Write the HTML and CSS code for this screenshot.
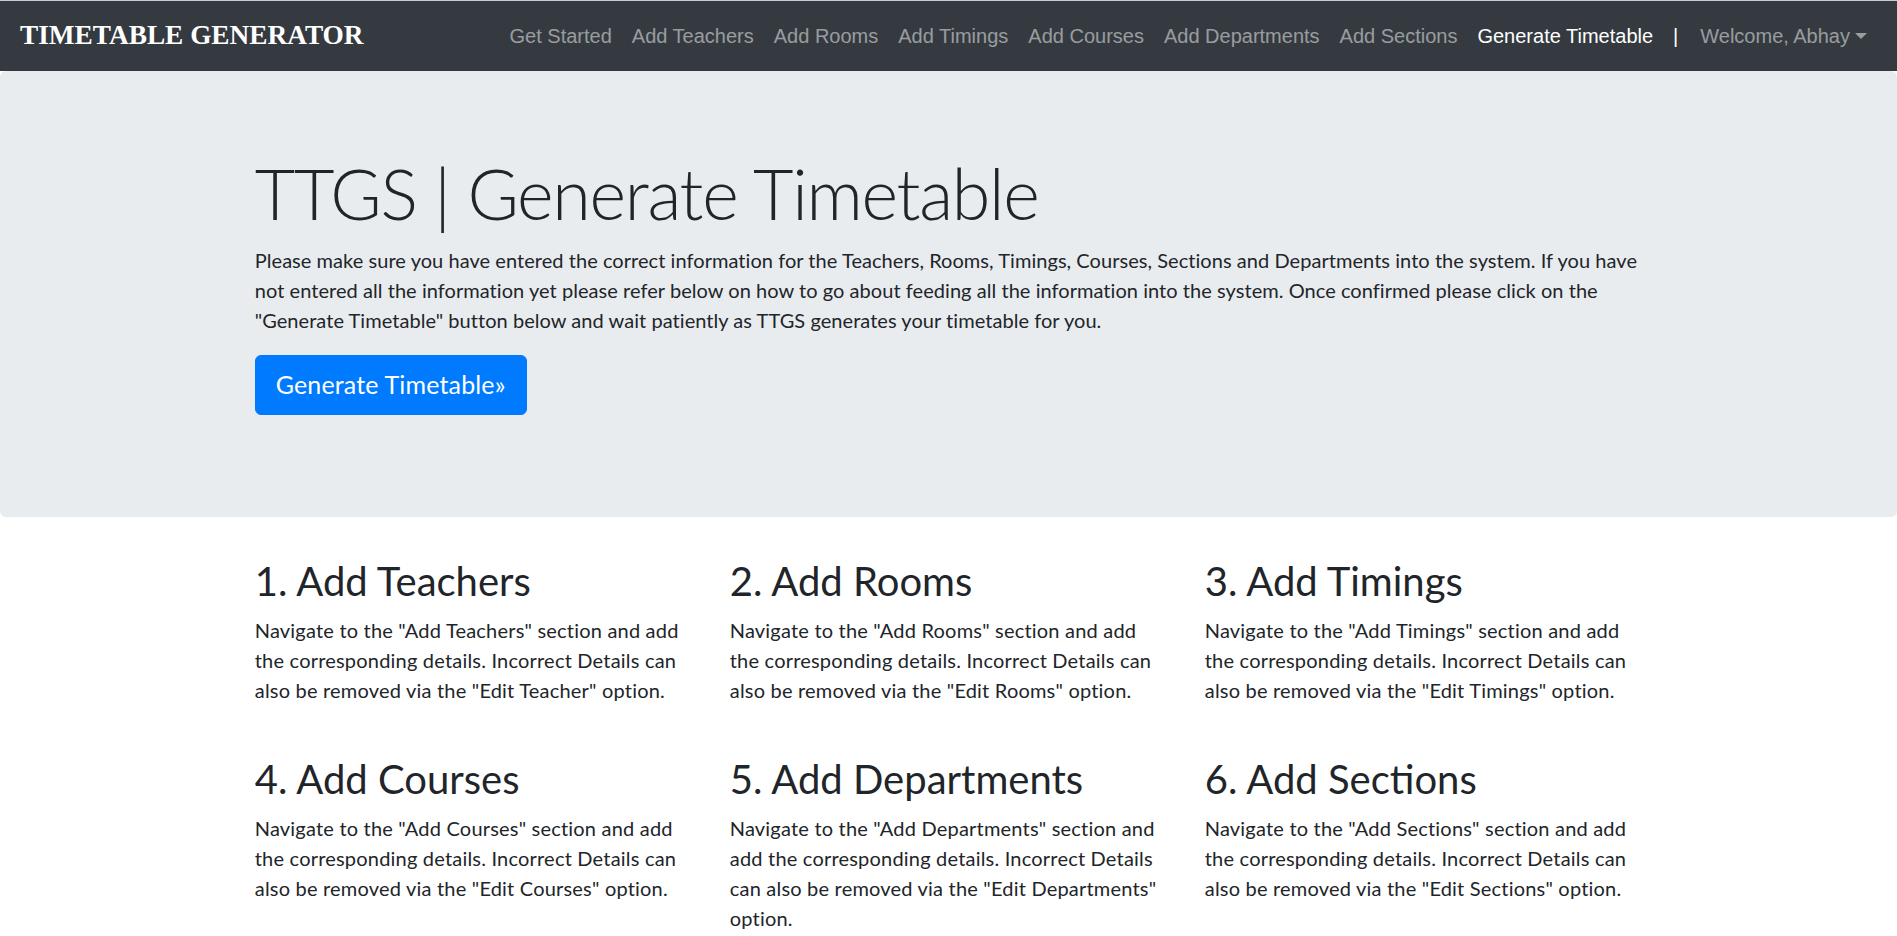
FILE: index.html
```html
<!DOCTYPE html>
<html lang="en">
<head>
<meta charset="utf-8">
<title>TTGS | Generate Timetable</title>
<link rel="stylesheet" href="styles.css">
</head>
<body>
<nav class="navbar">
  <a class="brand" href="#">TIMETABLE GENERATOR</a>
  <ul class="nav">
    <li><a class="nav-link" href="#">Get Started</a></li>
    <li><a class="nav-link" href="#">Add Teachers</a></li>
    <li><a class="nav-link" href="#">Add Rooms</a></li>
    <li><a class="nav-link" href="#">Add Timings</a></li>
    <li><a class="nav-link" href="#">Add Courses</a></li>
    <li><a class="nav-link" href="#">Add Departments</a></li>
    <li><a class="nav-link" href="#">Add Sections</a></li>
    <li><a class="nav-link active" href="#">Generate Timetable</a></li>
    <li><span class="sep">|</span></li>
    <li><a class="nav-link dropdown-toggle" href="#">Welcome, Abhay</a></li>
  </ul>
</nav>
<main>
  <div class="jumbotron">
    <div class="container">
      <h1 class="display">TTGS | Generate Timetable</h1>
      <p class="intro">Please make sure you have entered the correct information for the Teachers, Rooms, Timings, Courses, Sections and Departments into the system. If you have not entered all the information yet please refer below on how to go about feeding all the information into the system. Once confirmed please click on the "Generate Timetable" button below and wait patiently as TTGS generates your timetable for you.</p>
      <p><a class="btn" href="#">Generate Timetable»</a></p>
    </div>
  </div>
  <div class="container">
    <div class="steps">
      <div class="step">
        <h2>1. Add Teachers</h2>
        <p>Navigate to the "Add Teachers" section and add the corresponding details. Incorrect Details can also be removed via the "Edit Teacher" option.</p>
      </div>
      <div class="step">
        <h2>2. Add Rooms</h2>
        <p>Navigate to the "Add Rooms" section and add the corresponding details. Incorrect Details can also be removed via the "Edit Rooms" option.</p>
      </div>
      <div class="step">
        <h2>3. Add Timings</h2>
        <p>Navigate to the "Add Timings" section and add the corresponding details. Incorrect Details can also be removed via the "Edit Timings" option.</p>
      </div>
      <div class="step">
        <h2>4. Add Courses</h2>
        <p>Navigate to the "Add Courses" section and add the corresponding details. Incorrect Details can also be removed via the "Edit Courses" option.</p>
      </div>
      <div class="step">
        <h2>5. Add Departments</h2>
        <p>Navigate to the "Add Departments" section and add the corresponding details. Incorrect Details can also be removed via the "Edit Departments" option.</p>
      </div>
      <div class="step">
        <h2>6. Add Sections</h2>
        <p>Navigate to the "Add Sections" section and add the corresponding details. Incorrect Details can also be removed via the "Edit Sections" option.</p>
      </div>
    </div>
  </div>
</main>
</body>
</html>
```

FILE: styles.css
```css
html { scrollbar-width: none; }
html::-webkit-scrollbar { width: 0; height: 0; }
* { box-sizing: border-box; }
body {
  margin: 0;
  font-family: Lato, "Noto Sans", sans-serif;
  font-size: 20px;
  line-height: 1.5;
  color: #212529;
  background: #fff;
}
a { text-decoration: none; }

.navbar {
  display: flex;
  align-items: center;
  justify-content: space-between;
  height: 71px;
  padding: 10px 20px;
  background: #343a40;
  border-top: 1px solid #c9ccd0;
}
.brand {
  font-family: "Liberation Serif", "Times New Roman", serif;
  font-weight: bold;
  font-size: 27.3px;
  line-height: 1;
  color: #fff;
}
.nav {
  display: flex;
  align-items: center;
  list-style: none;
  margin: 0;
  padding: 0;
  font-family: "Liberation Sans", Arial, sans-serif;
  font-size: 20px;
  line-height: 1.5;
}
.nav-link {
  display: block;
  padding: 10px 10px;
  color: rgba(255, 255, 255, 0.5);
}
.nav-link.active { color: #fff; }
.sep {
  display: block;
  padding: 10px 12px 10px 10px;
  color: #fff;
}
.dropdown-toggle::after {
  content: "";
  display: inline-block;
  margin-left: 5px;
  vertical-align: 4px;
  border-top: 6px solid;
  border-right: 6px solid transparent;
  border-left: 6px solid transparent;
}

.container {
  max-width: 1425px;
  margin: 0 auto;
  padding: 0 18.75px;
}
.jumbotron {
  background: #e9ecef;
  padding: 80px 40px 82px;
  margin-bottom: 40px;
  border-radius: 6px;
}
.display {
  margin: 0 0 10px;
  font-size: 70px;
  font-weight: 300;
  line-height: 1.2;
  letter-spacing: -1.3px;
}
p { margin: 0 0 20px; }
.intro { letter-spacing: 0.05px; }
.btn {
  display: inline-block;
  padding: 10px 20px;
  font-size: 25px;
  line-height: 1.5;
  letter-spacing: 0.15px;
  color: #fff;
  background: #007bff;
  border: 1px solid #007bff;
  border-radius: 6px;
}

.steps {
  display: grid;
  grid-template-columns: repeat(3, 1fr);
  column-gap: 37.5px;
  row-gap: 30px;
}
.step h2 {
  margin: 0 0 10px;
  font-size: 40px;
  font-weight: 400;
  line-height: 1.2;
}
.step p { letter-spacing: 0.2px; }
```
